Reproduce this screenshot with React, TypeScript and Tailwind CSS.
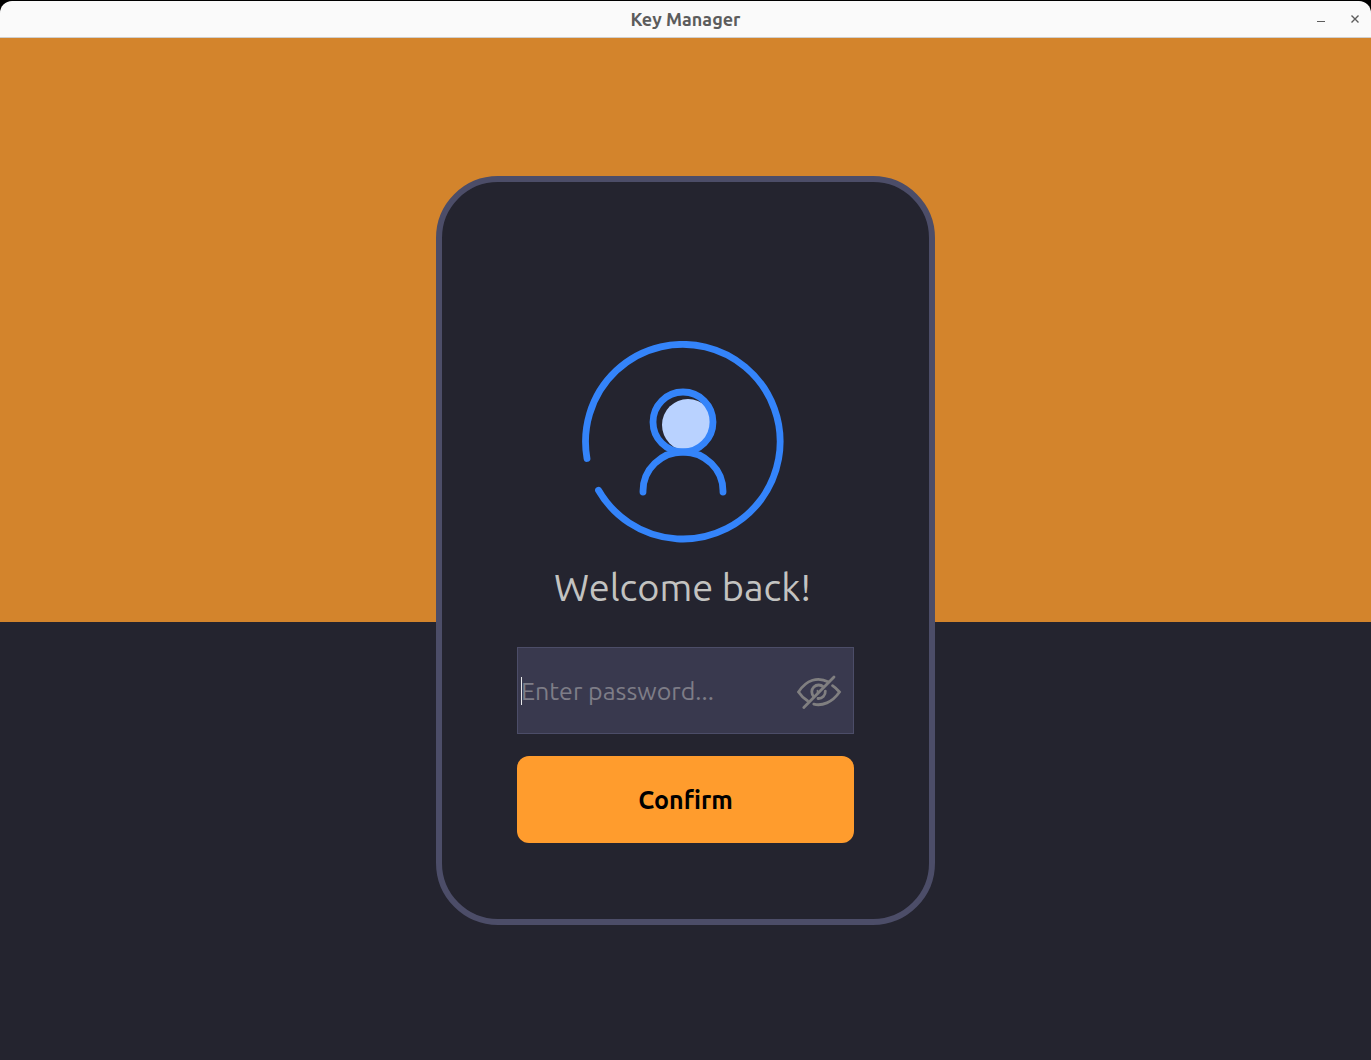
import React, { useState } from "react";

function TitleBar() {
  return (
    <div className="bg-black pt-px">
      <header className="grid h-[37px] grid-cols-[1fr_auto_1fr] items-center rounded-t-xl border-b border-[#cfcfcf] bg-[#fafafa]">
        <h1 className="col-start-2 text-[18px] leading-6 font-bold text-[#5c5c5c]">Key Manager</h1>
        <div className="flex justify-end gap-2.5 pr-1">
          <button type="button" aria-label="Minimize" className="flex size-6 items-center justify-center">
            <svg viewBox="0 0 24 24" className="size-6" fill="none" stroke="#5c5c5c">
              <path d="M8 14.5h8" />
            </svg>
          </button>
          <button type="button" aria-label="Close" className="flex size-6 items-center justify-center">
            <svg viewBox="0 0 24 24" className="size-6" fill="none" stroke="#5c5c5c" strokeWidth="1.4">
              <path d="M8.5 8.5l7 7M15.5 8.5l-7 7" />
            </svg>
          </button>
        </div>
      </header>
    </div>
  );
}

function Avatar() {
  return (
    <svg viewBox="0 0 202 202" className="size-[202px]" fill="none" stroke="#3484fa" strokeWidth="6.8" strokeLinecap="round" aria-hidden="true">
      <path d="M5 117.5A97.3 97.3 0 1 1 16.5 149.2" />
      <circle cx="106" cy="84" r="26" fill="#b9d2ff" stroke="none" />
      <circle cx="101" cy="81" r="30" />
      <path d="M61 151v-1a40 39 0 0 1 80 0v1" />
    </svg>
  );
}

function EyeOff() {
  return (
    <svg viewBox="0 0 46 38" className="h-[38px] w-[46px]" fill="none" stroke="#807f80" strokeWidth="2.8" strokeLinecap="round" aria-hidden="true">
      <path d="M38 5L7.8 35.5" />
      <path d="M32.5 10C22 4.5 10.5 7.5 2.5 20C5 23.7 8 26.7 11.5 28.7" />
      <path d="M36.5 13.7C39.5 15.7 41.5 17.7 43.5 20C36 30.7 26 34.2 17.8 32.2" />
      <path d="M27.5 15A6.8 6.8 0 0 0 17.8 24.7" />
      <path d="M29.3 19.2A6.8 6.8 0 0 1 22 26.5" />
      <path d="M21.5 21V18.5" strokeWidth="1.6" />
    </svg>
  );
}

export default function App() {
  const [password, setPassword] = useState("");
  const [visible, setVisible] = useState(false);

  return (
    <div className="flex min-h-screen flex-col font-['Ubuntu','Noto_Sans',sans-serif]">
      <TitleBar />
      <main className="flex flex-1 flex-col items-center bg-[linear-gradient(#d3842c_57.143%,#24242f_57.143%)] pt-[138px] pb-8">
        <form
          onSubmit={(e) => e.preventDefault()}
          className="w-full max-w-[499px] rounded-[62px] border-[6px] border-[#4c4d68] bg-[#24242f] px-[75px] pt-[159px] pb-[76px]"
        >
          <div className="flex flex-col items-center pr-[6px]">
            <Avatar />
            <h2 className="mt-5 text-[38px] leading-[48px] whitespace-nowrap text-[#c3c3c1]">Welcome back!</h2>
          </div>
          <div className="mt-9 flex h-[87px] items-center border border-[#4c4d68] bg-[#39394e] pr-[11px] pl-[3px]">
            <div className="relative min-w-0 flex-1">
              {password === "" && <span className="absolute top-1 left-0 h-7 w-px bg-[#e8e8e8]" />}
              <input
                type={visible ? "text" : "password"}
                aria-label="Password"
                placeholder="Enter password..."
                value={password}
                onChange={(e) => setPassword(e.target.value)}
                className="block w-full bg-transparent text-[25px] leading-9 text-[#c3c3c1] outline-none placeholder:text-[#7e7d87]"
              />
            </div>
            <button type="button" aria-label="Toggle password visibility" onClick={() => setVisible(!visible)}>
              <EyeOff />
            </button>
          </div>
          <button type="submit" className="mt-[22px] block h-[87px] w-full rounded-xl bg-[#ff9c2d] pt-0.5 text-[25px] font-bold text-black">
            Confirm
          </button>
        </form>
      </main>
    </div>
  );
}
